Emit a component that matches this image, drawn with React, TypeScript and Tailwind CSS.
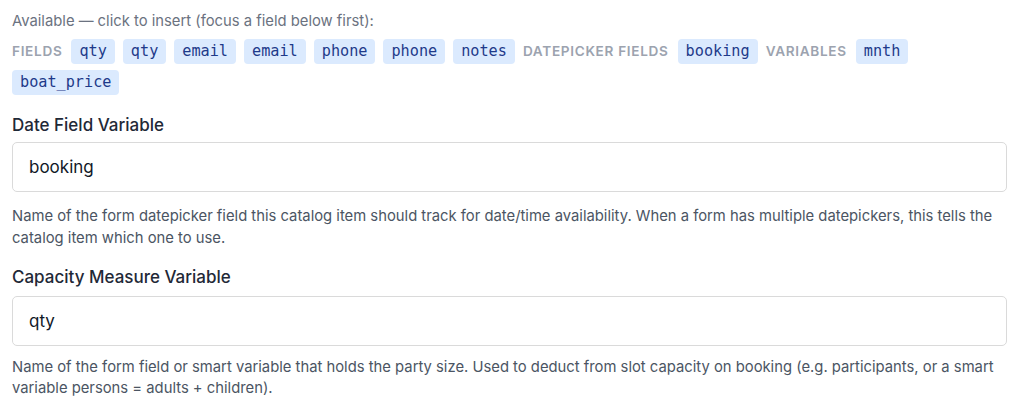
import React from "react";

const Chip = ({ children }: { children: React.ReactNode }) => (
  <button
    type="button"
    className="rounded-[4px] bg-[#dbeafe] px-2 py-[2px] text-[15.2px] leading-[21px] text-[#1e3a8a] [font-family:'DejaVu_Sans_Mono',monospace]"
  >
    {children}
  </button>
);

const Label = ({ children }: { children: React.ReactNode }) => (
  <span className="mr-[1px] text-[13.6px] font-semibold uppercase tracking-[0.05em] text-[#9ca3af]">
    {children}
  </span>
);

export default function App() {
  return (
    <div className="min-h-screen bg-white pl-3 pr-[17px] pt-[11px] [font-family:Inter,'Noto_Sans',sans-serif]">
      <p className="text-[14.8px] leading-[20px] text-[#6b7280]">
        Available — click to insert (focus a field below first):
      </p>
      <div className="mt-[8px] flex flex-wrap items-center gap-x-2 gap-y-[6px]">
        <Label>Fields</Label>
        <Chip>qty</Chip>
        <Chip>qty</Chip>
        <Chip>email</Chip>
        <Chip>email</Chip>
        <Chip>phone</Chip>
        <Chip>phone</Chip>
        <Chip>notes</Chip>
        <Label>Datepicker fields</Label>
        <Chip>booking</Chip>
        <Label>Variables</Label>
        <Chip>mnth</Chip>
        <Chip>boat_price</Chip>
      </div>

      <div className="mt-[19px]">
        <label className="block text-[17px] font-medium leading-[22px] text-[#1f2937]">
          Date Field Variable
        </label>
        <input
          readOnly
          value="booking"
          className="mt-[6px] block h-[50px] w-full rounded-[5px] border border-[#dadada] px-4 text-[17px] text-[#111827] outline-none"
        />
        <p className="mt-[13px] text-[14.8px] leading-[22px] text-[#4b5563]">
          Name of the form datepicker field this catalog item should track for date/time availability. When a form has multiple datepickers, this tells the catalog item which one to use.
        </p>
      </div>

      <div className="mt-[17px]">
        <label className="block text-[17px] font-medium leading-[22px] text-[#1f2937]">
          Capacity Measure Variable
        </label>
        <input
          readOnly
          value="qty"
          className="mt-[8px] block h-[50px] w-full rounded-[5px] border border-[#dadada] px-4 text-[17px] text-[#111827] outline-none"
        />
        <p className="mt-[11px] text-[14.8px] leading-[21px] text-[#4b5563]">
          Name of the form field or smart variable that holds the party size. Used to deduct from slot capacity on booking (e.g. participants, or a smart variable persons = adults + children).
        </p>
      </div>
    </div>
  );
}
